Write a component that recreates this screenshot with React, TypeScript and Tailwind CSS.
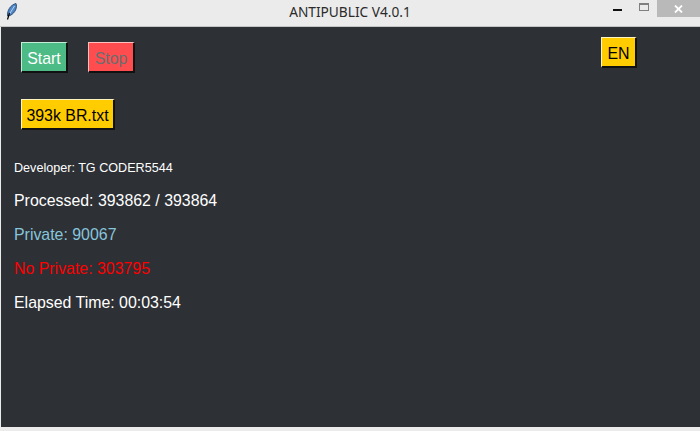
const font = { fontFamily: '"Liberation Sans", Arial, sans-serif' };

const btn = "h-[31px] pt-[3px] border-t border-l border-r-2 border-b-2 border-r-[#111111] border-b-[#111111] flex items-center justify-center text-[15.9px] leading-none";

function Feather() {
    return (
        <svg width="14" height="20" viewBox="0 0 14 20" className="ml-[5px] mt-[2px]">
            <path d="M2.5 14 C2 9 5 3 11 1.5 C12.5 5 10.5 11 5 13.5 Z" fill="#4f86c6" stroke="#1d3a63" strokeWidth="0.8" />
            <path d="M9.5 4 L4.5 12" stroke="#b7d3f2" strokeWidth="1" />
            <path d="M4.5 11 L2.5 17.5" stroke="#000000" strokeWidth="1.2" />
        </svg>
    );
}

function TitleBar() {
    return (
        <div className="h-[27px] bg-[#ebebeb] border-b border-b-[#c4c4c4] grid grid-cols-[1fr_auto_1fr] items-start">
            <Feather />
            <div className="text-[13.7px] leading-[24px] text-[#2a2a2a]" style={{ fontFamily: '"Noto Sans", sans-serif' }}>ANTIPUBLIC V4.0.1</div>
            <div className="flex justify-end">
                <div className="w-[9px] h-[2px] bg-[#111111] mt-[9px] mr-[17px]"></div>
                <div className="w-[10px] h-[8px] border border-[#808080] border-t-2 mt-[3px] mr-[8px]"></div>
                <div className="w-[43px] h-[17px] bg-[#b9b9b9] flex items-center justify-center">
                    <svg width="9" height="8" viewBox="0 0 9 8">
                        <path d="M1 0.5 L8 7.5 M8 0.5 L1 7.5" stroke="#ffffff" strokeWidth="1.8" />
                    </svg>
                </div>
            </div>
        </div>
    );
}

export default function App() {
    return (
        <div className="w-[700px] h-[431px] bg-[#ebebeb] flex flex-col overflow-hidden" style={font}>
            <TitleBar />
            <div className="h-[400px] ml-px bg-[#2d3035] flex flex-col">
                <div className="flex justify-between items-start">
                    <div className="flex gap-[20px] pl-[20px] pt-[15px]">
                        <div className={btn + " w-[47px] bg-[#4cbb85] border-t-[#c4ecd6] border-l-[#c4ecd6] text-white"}>Start</div>
                        <div className={btn + " w-[47px] bg-[#ff4d4f] border-t-[#ffc0c0] border-l-[#ffc0c0] text-[#696e70]"}>Stop</div>
                    </div>
                    <div className={btn + " w-[36px] mt-[10px] mr-[63px] bg-[#ffcc00] border-t-[#fff4c0] border-l-[#fff4c0] text-black"}>EN</div>
                </div>
                <div className={btn + " w-[94px] ml-[20px] mt-[26px] bg-[#ffcc00] border-t-[#fff4c0] border-l-[#fff4c0] text-black"}>393k BR.txt</div>
                <div className="pl-[13px] pt-[29px] flex flex-col">
                    <div className="text-[12.6px] leading-[18px] text-white">Developer: TG CODER5544</div>
                    <div className="text-[15.9px] leading-[20px] mt-[14px] text-white">Processed: 393862 / 393864</div>
                    <div className="text-[15.9px] leading-[20px] mt-[14px] text-[#87c5dc]">Private: 90067</div>
                    <div className="text-[15.9px] leading-[20px] mt-[14px] text-[#ff0000]">No Private: 303795</div>
                    <div className="text-[15.9px] leading-[20px] mt-[14px] text-white">Elapsed Time: 00:03:54</div>
                </div>
            </div>
        </div>
    );
}
